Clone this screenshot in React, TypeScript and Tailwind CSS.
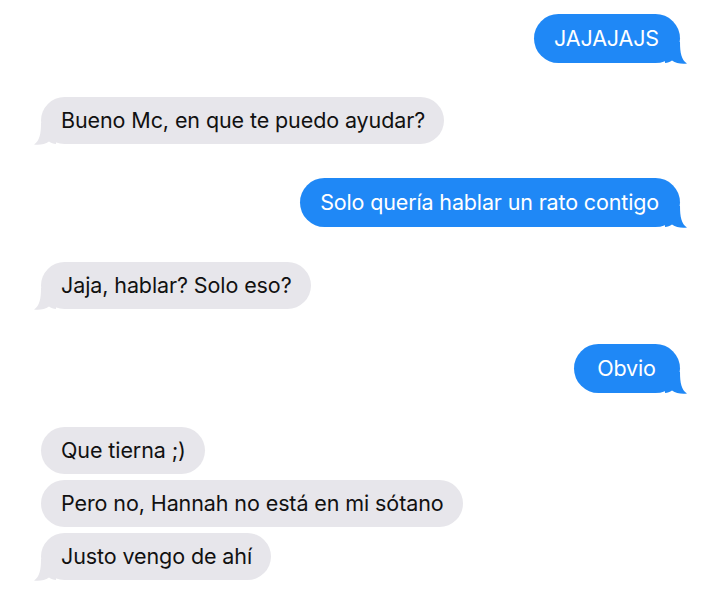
import React from "react";

type Msg = { text: string; me: boolean; tail: boolean; gapTop: number };

const msgs: Msg[] = [
  { text: "JAJAJAJS", me: true, tail: true, gapTop: 0 },
  { text: "Bueno Mc, en que te puedo ayudar?", me: false, tail: true, gapTop: 34 },
  { text: "Solo quería hablar un rato contigo", me: true, tail: true, gapTop: 34 },
  { text: "Jaja, hablar? Solo eso?", me: false, tail: true, gapTop: 35 },
  { text: "Obvio", me: true, tail: true, gapTop: 35 },
  { text: "Que tierna ;)", me: false, tail: false, gapTop: 34 },
  { text: "Pero no, Hannah no está en mi sótano", me: false, tail: false, gapTop: 6 },
  { text: "Justo vengo de ahí", me: false, tail: true, gapTop: 6 },
];

function Tail({ me }: { me: boolean }) {
  return (
    <svg
      width="22"
      height="22"
      viewBox="0 0 22 22"
      className={
        me
          ? "absolute bottom-[-1px] right-[-7px]"
          : "absolute bottom-[-1px] left-[-7px] scale-x-[-1]"
      }
    >
      <path
        d="M0 0 L15 0 C15 11 16.5 18 22 21.6 C16 22.3 11 21.2 7 18.6 C5 20.2 2.5 21 0 21 Z"
        fill={me ? "#1f88f6" : "#e7e6eb"}
      />
    </svg>
  );
}

export default function App() {
  return (
    <div
      className="w-[720px] h-[593px] bg-white pt-[14px] pl-[41px] pr-[40px] flex flex-col overflow-hidden"
      style={{ fontFamily: "Inter, 'Liberation Sans', sans-serif" }}
    >
      {msgs.map((m, i) => (
        <div
          key={i}
          className={m.me ? "flex justify-end" : "flex justify-start"}
          style={{ marginTop: m.gapTop }}
        >
          <div
            className={
              m.me
                ? "relative h-[49px] min-w-[106px] justify-center rounded-[25px] pl-[20px] pr-[21px] flex items-center bg-[#1f88f6] text-white text-[21.5px] tracking-[-0.15px]"
                : "relative h-[47px] rounded-[24px] pl-[20px] pr-[19px] flex items-center bg-[#e7e6eb] text-[#111111] text-[21.5px] tracking-[-0.1px]"
            }
          >
            {m.tail && <Tail me={m.me} />}
            <span className="relative">{m.text}</span>
          </div>
        </div>
      ))}
    </div>
  );
}
